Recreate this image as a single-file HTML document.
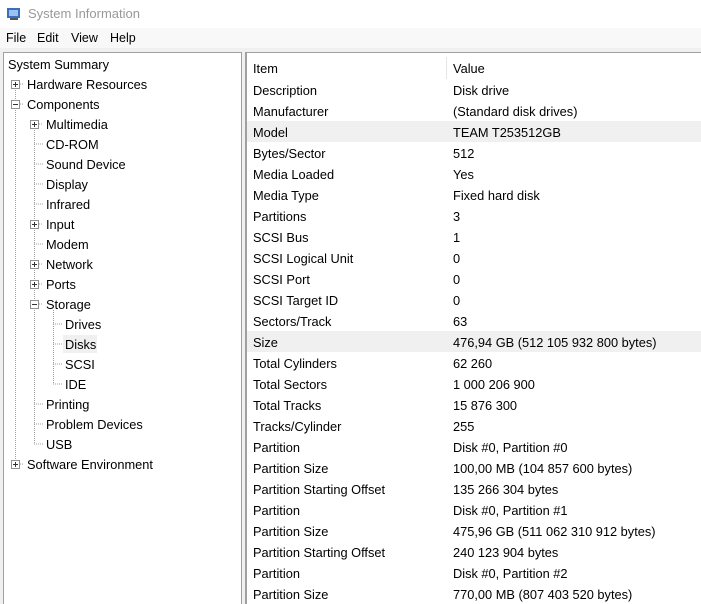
<!DOCTYPE html>
<html style="overflow:hidden;width:701px;height:604px"><head><meta charset="utf-8"><style>
*{margin:0;padding:0;box-sizing:border-box}
body{width:701px;height:604px;overflow:hidden;background:#f0f0f0;font-family:"Liberation Sans",sans-serif;font-size:12.8px;color:#000;position:relative}
.title{position:absolute;left:0;top:0;width:701px;height:28px;background:#fff;}
.title span{position:absolute;left:28px;top:6px;color:#999;font-size:13px}
.menu{position:absolute;left:0;top:28px;width:701px;height:20px;background:#f8f8f8}
.menu span{position:absolute;top:3px;font-size:12.5px}
.left{position:absolute;left:3px;top:52px;width:239px;height:560px;background:#fff;border:1px solid #a0a0a0;border-bottom:none}
.right{position:absolute;left:245px;top:52px;width:456px;height:552px;background:#fff;border-left:2px solid #a0a0a0;border-top:1px solid #a0a0a0;overflow:hidden}
.t{position:absolute;white-space:nowrap;line-height:16px;margin-top:1px}
.r{position:absolute;left:0;width:470px;height:21px}
.r span{position:absolute;top:4px;white-space:nowrap}
.r .a{left:6px}.r .b{left:206px}
.hl{background:#f0f0f0}
</style></head><body>
<div class="title"><svg style="position:absolute;left:6px;top:6px" width="16" height="16"><rect x="1" y="2" width="13" height="10" fill="#3a6fc0"/><rect x="3" y="4" width="9" height="6" fill="#9cc3ef"/><rect x="4" y="12" width="8" height="2" fill="#555"/></svg><span>System Information</span></div>
<div class="menu"><span style="left:6px">File</span><span style="left:37px">Edit</span><span style="left:71px">View</span><span style="left:110px">Help</span></div>
<div class="left"></div>
<svg style="position:absolute;left:0;top:0" width="242" height="604">
<g stroke="#a0a0a0" stroke-dasharray="1,1" fill="none">
<path d="M15.5 90V460M34.5 130V444M53.5 310V384"/>
<path d="M20 84H24M20 104H24M39 124H43M34 144H43M34 164H43M34 184H43M34 204H43M39 224H43M34 244H43M39 264H43M39 284H43M39 304H43M53 324H62M53 344H62M53 364H62M53 384H62M34 404H43M34 424H43M34 444H43M20 464H24"/>
</g>
<g fill="#fff" stroke="#919191">
<rect x="11.5" y="80.5" width="8" height="8"/><rect x="11.5" y="100.5" width="8" height="8"/><rect x="11.5" y="460.5" width="8" height="8"/>
<rect x="30.5" y="120.5" width="8" height="8"/><rect x="30.5" y="220.5" width="8" height="8"/><rect x="30.5" y="260.5" width="8" height="8"/><rect x="30.5" y="280.5" width="8" height="8"/><rect x="30.5" y="300.5" width="8" height="8"/>
</g>
<g stroke="#333">
<path d="M13 84.5H18M15.5 82V87M13 104.5H18M13 464.5H18M15.5 462V467M32 124.5H37M34.5 122V127M32 224.5H37M34.5 222V227M32 264.5H37M34.5 262V267M32 284.5H37M34.5 282V287M32 304.5H37"/>
</g>
<rect x="63" y="335" width="34" height="18" fill="#f0f0f0"/>
</svg>
<div class="t" style="left:8px;top:56px">System Summary</div>
<div class="t" style="left:27px;top:76px">Hardware Resources</div>
<div class="t" style="left:27px;top:96px">Components</div>
<div class="t" style="left:46px;top:116px">Multimedia</div>
<div class="t" style="left:46px;top:136px">CD-ROM</div>
<div class="t" style="left:46px;top:156px">Sound Device</div>
<div class="t" style="left:46px;top:176px">Display</div>
<div class="t" style="left:46px;top:196px">Infrared</div>
<div class="t" style="left:46px;top:216px">Input</div>
<div class="t" style="left:46px;top:236px">Modem</div>
<div class="t" style="left:46px;top:256px">Network</div>
<div class="t" style="left:46px;top:276px">Ports</div>
<div class="t" style="left:46px;top:296px">Storage</div>
<div class="t" style="left:65px;top:316px">Drives</div>
<div class="t" style="left:65px;top:336px">Disks</div>
<div class="t" style="left:65px;top:356px">SCSI</div>
<div class="t" style="left:65px;top:376px">IDE</div>
<div class="t" style="left:46px;top:396px">Printing</div>
<div class="t" style="left:46px;top:416px">Problem Devices</div>
<div class="t" style="left:46px;top:436px">USB</div>
<div class="t" style="left:27px;top:456px">Software Environment</div>
<div class="right">
<div class="r" style="top:4px"><span class="a">Item</span><span class="b">Value</span><div style="position:absolute;left:199px;top:0;width:1px;height:22px;background:#e5e5e5"></div></div>
<div class="r" style="top:26px"><span class="a">Description</span><span class="b">Disk drive</span></div>
<div class="r" style="top:47px"><span class="a">Manufacturer</span><span class="b">(Standard disk drives)</span></div>
<div class="r hl" style="top:68px"><span class="a">Model</span><span class="b">TEAM T253512GB</span></div>
<div class="r" style="top:89px"><span class="a">Bytes/Sector</span><span class="b">512</span></div>
<div class="r" style="top:110px"><span class="a">Media Loaded</span><span class="b">Yes</span></div>
<div class="r" style="top:131px"><span class="a">Media Type</span><span class="b">Fixed hard disk</span></div>
<div class="r" style="top:152px"><span class="a">Partitions</span><span class="b">3</span></div>
<div class="r" style="top:173px"><span class="a">SCSI Bus</span><span class="b">1</span></div>
<div class="r" style="top:194px"><span class="a">SCSI Logical Unit</span><span class="b">0</span></div>
<div class="r" style="top:215px"><span class="a">SCSI Port</span><span class="b">0</span></div>
<div class="r" style="top:236px"><span class="a">SCSI Target ID</span><span class="b">0</span></div>
<div class="r" style="top:257px"><span class="a">Sectors/Track</span><span class="b">63</span></div>
<div class="r hl" style="top:278px"><span class="a">Size</span><span class="b">476,94 GB (512 105 932 800 bytes)</span></div>
<div class="r" style="top:299px"><span class="a">Total Cylinders</span><span class="b">62 260</span></div>
<div class="r" style="top:320px"><span class="a">Total Sectors</span><span class="b">1 000 206 900</span></div>
<div class="r" style="top:341px"><span class="a">Total Tracks</span><span class="b">15 876 300</span></div>
<div class="r" style="top:362px"><span class="a">Tracks/Cylinder</span><span class="b">255</span></div>
<div class="r" style="top:383px"><span class="a">Partition</span><span class="b">Disk #0, Partition #0</span></div>
<div class="r" style="top:404px"><span class="a">Partition Size</span><span class="b">100,00 MB (104 857 600 bytes)</span></div>
<div class="r" style="top:425px"><span class="a">Partition Starting Offset</span><span class="b">135 266 304 bytes</span></div>
<div class="r" style="top:446px"><span class="a">Partition</span><span class="b">Disk #0, Partition #1</span></div>
<div class="r" style="top:467px"><span class="a">Partition Size</span><span class="b">475,96 GB (511 062 310 912 bytes)</span></div>
<div class="r" style="top:488px"><span class="a">Partition Starting Offset</span><span class="b">240 123 904 bytes</span></div>
<div class="r" style="top:509px"><span class="a">Partition</span><span class="b">Disk #0, Partition #2</span></div>
<div class="r" style="top:530px"><span class="a">Partition Size</span><span class="b">770,00 MB (807 403 520 bytes)</span></div>
</div>
</body></html>
